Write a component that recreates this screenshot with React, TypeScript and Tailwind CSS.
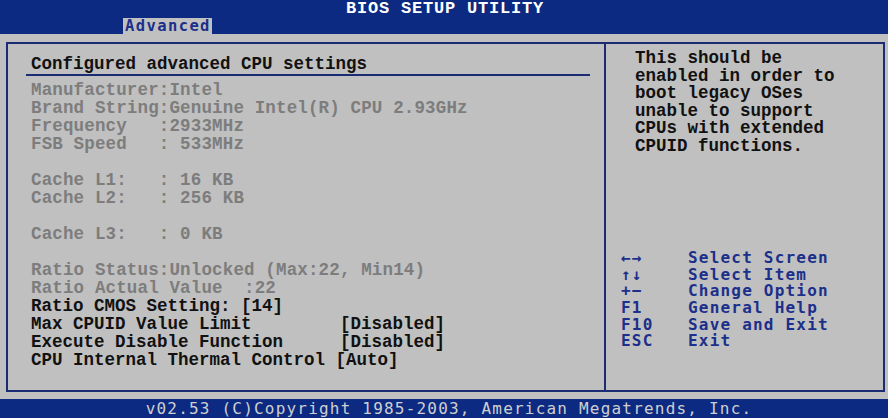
import React from 'react'

const mono = { fontFamily: '"Liberation Mono", "Courier New", monospace' }
const vga = { fontFamily: '"DejaVu Sans Mono", "Liberation Mono", monospace' }

const info = [
  'Manufacturer:Intel',
  'Brand String:Genuine Intel(R) CPU 2.93GHz',
  'Frequency   :2933MHz',
  'FSB Speed   : 533MHz',
  '',
  'Cache L1:   : 16 KB',
  'Cache L2:   : 256 KB',
  '',
  'Cache L3:   : 0 KB',
  '',
  'Ratio Status:Unlocked (Max:22, Min14)',
  'Ratio Actual Value  :22',
]

const settings = [
  { label: 'Max CPUID Value Limit', value: '[Disabled]' },
  { label: 'Execute Disable Function', value: '[Disabled]' },
]

const keys = [
  { key: '←→', desc: 'Select Screen' },
  { key: '↑↓', desc: 'Select Item' },
  { key: '+−', desc: 'Change Option' },
  { key: 'F1', desc: 'General Help' },
  { key: 'F10', desc: 'Save and Exit' },
  { key: 'ESC', desc: 'Exit' },
]

export default function App() {
  return (
    <div className="w-[888px] h-[418px] flex flex-col bg-[#c0c0c0] overflow-hidden">
      {/* Title bar */}
      <div className="h-[34px] bg-[#0c2a82] flex flex-col">
        <div
          className="h-[18px] flex justify-center items-center text-white font-bold text-[17px] leading-[18px] tracking-[0.8px] pl-[2px]"
          style={mono}
        >
          BIOS SETUP UTILITY
        </div>
        <div className="h-[16px] flex pl-[123px]">
          <div
            className="w-[89px] h-[16px] bg-[#c0c0c0] text-[#1c2f8a] font-bold text-[15.5px] leading-[16px] tracking-[1.4px] pl-[2px]"
            style={vga}
          >
            Advanced
          </div>
        </div>
      </div>

      {/* Main frame */}
      <div className="flex-1 px-[5px] pt-[8px] pb-[7px]">
        <div className="h-full w-[879px] ml-[1px] border-2 border-[#1c2c74] flex">
          {/* Left pane */}
          <div className="w-[596px] pt-[11px] font-bold text-[17.5px] leading-[18px] whitespace-pre" style={mono}>
            <div className="ml-[18px] w-[564px] border-b-2 border-[#1c2c74] pl-[5px] pb-[1px] text-[#111]">
              Configured advanced CPU settings
            </div>
            <div className="pl-[23px] pt-[5px]">
              {info.map((line, i) => (
                <div key={i} className="h-[18px] text-[#7d7d7d] tracking-[0.15px]">
                  {line}
                </div>
              ))}
              <div className="h-[18px] text-[#111]">Ratio CMOS Setting: [14]</div>
              {settings.map((s) => (
                <div key={s.label} className="h-[18px] flex text-[#111]">
                  <span className="w-[309px]">{s.label}</span>
                  <span>{s.value}</span>
                </div>
              ))}
              <div className="h-[18px] text-[#111]">CPU Internal Thermal Control [Auto]</div>
            </div>
          </div>

          {/* Right pane */}
          <div className="flex-1 border-l-2 border-[#1c2c74] flex flex-col">
            <div
              className="pl-[29px] pt-[6px] font-bold text-[17.5px] leading-[17.6px] text-[#111] whitespace-pre"
              style={mono}
            >
              {'This should be\nenabled in order to\nboot legacy OSes\nunable to support\nCPUs with extended\nCPUID functions.'}
            </div>
            <div
              className="mt-auto mb-[40px] pl-[15px] font-bold text-[16px] leading-[16.7px] tracking-[1.2px] text-[#1c2f8a]"
              style={vga}
            >
              {keys.map((k) => (
                <div key={k.key} className="flex h-[16.7px]">
                  <span className="w-[67px]">{k.key}</span>
                  <span>{k.desc}</span>
                </div>
              ))}
            </div>
          </div>
        </div>
      </div>

      {/* Footer */}
      <div
        className="h-[19px] bg-[#0c2a82] flex justify-center items-center text-[#cfcfcf] text-[16px] leading-[19px] tracking-[1.2px] pl-[10px]"
        style={vga}
      >
        v02.53 (C)Copyright 1985-2003, American Megatrends, Inc.
      </div>
    </div>
  )
}
